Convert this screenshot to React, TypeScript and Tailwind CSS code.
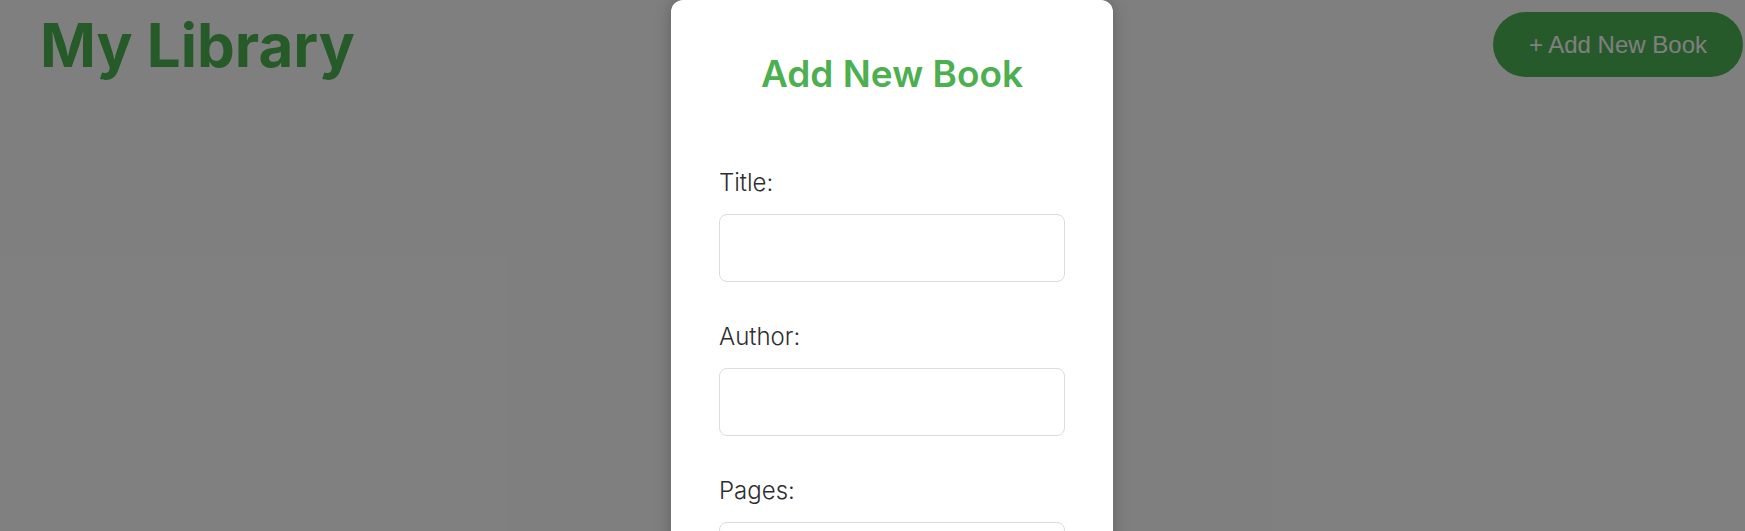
import React from "react";

const Field = ({ label, last }: { label: string; last?: boolean }) => {
  return (
    <div className={last ? "" : "mb-[43px]"}>
      <label className="block text-[24px] leading-none font-light text-[#2e2e2e] mb-[19px]">{label}</label>
      <input
        type="text"
        className="block w-full h-[68px] rounded-lg border border-[#dcdcdc] bg-white px-3 outline-none"
      />
    </div>
  );
};

export default function App() {
  return (
    <div
      className="relative w-full h-[531px] overflow-hidden bg-white"
      style={{ fontFamily: "Inter, 'Noto Sans', sans-serif" }}
    >
      <header className="flex items-center justify-between pl-[40px] pr-[2px] pt-[12px]">
        <h1 className="text-[60px] leading-none font-bold text-[#4cb652] tracking-normal">My Library</h1>
        <button
          className="h-[65px] rounded-full bg-[#4fb556] px-[36px] text-[24px] text-white"
          style={{ fontFamily: "'Liberation Sans', Arial, sans-serif" }}
        >
          + Add New Book
        </button>
      </header>

      {/* overlay */}
      <div className="absolute inset-0 bg-black/50" />

      {/* modal */}
      <div className="absolute top-0 left-[671px] w-[442px] h-[560px] rounded-xl bg-white shadow-[0_0_16px_rgba(0,0,0,0.25)] px-[48px] pt-[55px]">
        <h2 className="text-center text-[37px] leading-none font-semibold text-[#4caf50] mb-[79px]">
          Add New Book
        </h2>
        <form>
          <Field label="Title:" />
          <Field label="Author:" />
          <Field label="Pages:" last />
        </form>
      </div>
    </div>
  );
}
